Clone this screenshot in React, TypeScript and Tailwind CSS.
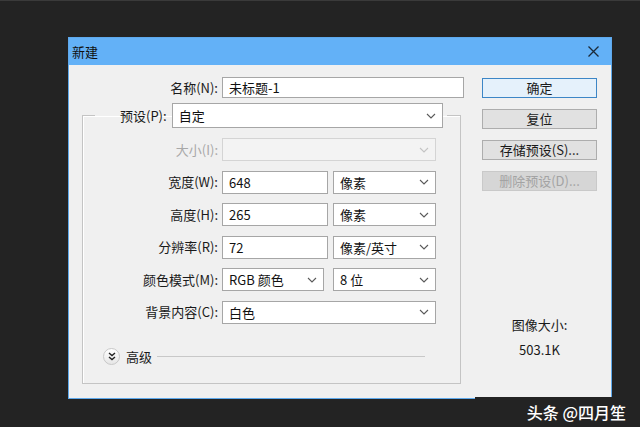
import type { ReactNode } from "react";

const font = { fontFamily: '"Noto Sans CJK SC", "Noto Sans", sans-serif' };

function Chevron({ light = false }: { light?: boolean }) {
  return (
    <svg width="10" height="6" viewBox="0 0 10 6" className="shrink-0">
      <path d="M1 1 L5 5 L9 1" fill="none" stroke={light ? "#c4c4c4" : "#5a5a5a"} strokeWidth="1.1" />
    </svg>
  );
}

function Select({ value, w, h = "h-[23px]", disabled = false }: { value: string; w: string; h?: string; disabled?: boolean }) {
  return (
    <div
      className={`${w} ${h} flex items-center justify-between pl-[6px] pr-[6px] border ${
        disabled ? "border-[#d4d4d4] bg-[#f3f3f3]" : "border-[#a6a6a6] bg-white"
      }`}
    >
      <span className="text-[13px] text-[#111] leading-none">{value}</span>
      <Chevron light={disabled} />
    </div>
  );
}

function Input({ value, w }: { value: string; w: string }) {
  return (
    <div className={`${w} h-[23px] flex items-center pl-[6px] border border-[#a6a6a6] bg-white`}>
      <span className="text-[13px] text-[#111] leading-none">{value}</span>
    </div>
  );
}

function Row({ label, disabled = false, children }: { label: string; disabled?: boolean; children: ReactNode }) {
  return (
    <div className="flex items-center h-[23px]">
      <span className={`w-[135px] text-right text-[13px] ${disabled ? "text-[#a8a8a8]" : "text-[#1a1a1a]"}`}>{label}</span>
      <div className="ml-[4px] flex items-center gap-[5px]">{children}</div>
    </div>
  );
}

function Button({ label, primary = false, disabled = false }: { label: string; primary?: boolean; disabled?: boolean }) {
  let cls = "border-[#adadad] bg-[#e1e1e1] text-[#1a1a1a]";
  if (primary) cls = "border-[#3d86c6] bg-[#e5f1fb] text-[#1a1a1a]";
  if (disabled) cls = "border-[#c9c9c9] bg-[#d6d6d6] text-[#a3a3a3]";
  return (
    <div className={`h-[20px] w-[115px] flex items-center justify-center border text-[13px] ${cls}`}>{label}</div>
  );
}

export default function App() {
  return (
    <div className="relative w-[640px] h-[427px] overflow-hidden bg-[#232323] pt-[37px] pl-[68px]" style={font}>
      <div className="absolute left-0 top-0 w-full h-px bg-[#3a3a3a]" />
      <div className="w-[544px] h-[362px] border border-[#5ea9ec] bg-[#f0f0f0] flex flex-col">
        <div className="h-[27px] bg-[#63b1f7] flex items-center justify-between pl-[3px] pr-[12px]">
          <span className="text-[13px] text-[#111]">新建</span>
          <svg width="11" height="11" viewBox="0 0 11 11">
            <path d="M0.5 0.5 L10.5 10.5 M10.5 0.5 L0.5 10.5" stroke="#1c2a38" strokeWidth="1.3" />
          </svg>
        </div>
        <div className="flex flex-1">
          <div className="w-[400px] pl-[13px] pt-[12px] flex flex-col">
            <div className="flex items-center h-[21px]">
              <span className="w-[136px] text-right text-[13px] text-[#1a1a1a]">名称(N):</span>
              <div className="ml-[4px] w-[242px] h-[21px] flex items-center pl-[6px] border border-[#a6a6a6] bg-white">
                <span className="text-[13px] text-[#111] leading-none">未标题-1</span>
              </div>
            </div>
            <fieldset className="mt-[5px] w-[379px] h-[281px] border border-[#c4c4c4] shadow-[inset_1px_1px_0_#ffffff]">
              <legend className="ml-[12px] pl-[25px] pr-[4px]">
                <div className="flex items-center h-[25px]">
                  <span className="text-[13px] text-[#1a1a1a]">预设(P):</span>
                  <div className="ml-[5px]">
                    <Select value="自定" w="w-[271px]" h="h-[25px]" />
                  </div>
                </div>
              </legend>
              <div className="mt-[10px] flex flex-col gap-[9.5px]">
                <Row label="大小(I):" disabled>
                  <Select value="" w="w-[214px]" disabled />
                </Row>
                <Row label="宽度(W):">
                  <Input value="648" w="w-[106px]" />
                  <Select value="像素" w="w-[103px]" />
                </Row>
                <Row label="高度(H):">
                  <Input value="265" w="w-[106px]" />
                  <Select value="像素" w="w-[103px]" />
                </Row>
                <Row label="分辨率(R):">
                  <Input value="72" w="w-[106px]" />
                  <Select value="像素/英寸" w="w-[103px]" />
                </Row>
                <Row label="颜色模式(M):">
                  <Select value="RGB 颜色" w="w-[102px]" />
                  <div className="ml-[4px]">
                    <Select value="8 位" w="w-[103px]" />
                  </div>
                </Row>
                <Row label="背景内容(C):">
                  <Select value="白色" w="w-[214px]" />
                </Row>
              </div>
              <div className="mt-[23px] flex items-center pl-[20px] pr-[35px]">
                <div className="w-[17px] h-[17px] rounded-full border border-[#c8c8c8] bg-gradient-to-b from-white to-[#e6e6e6] flex items-center justify-center">
                  <svg width="8" height="9" viewBox="0 0 8 9">
                    <path d="M1 1 L4 3.5 L7 1 M1 5 L4 7.5 L7 5" fill="none" stroke="#222" strokeWidth="1.4" />
                  </svg>
                </div>
                <span className="ml-[6px] text-[13px] text-[#1a1a1a]">高级</span>
                <div className="ml-[5px] flex-1 h-px bg-[#c8c8c8]" />
              </div>
            </fieldset>
          </div>
          <div className="ml-[13px] w-[115px] pt-[13px] flex flex-col">
            <div className="flex flex-col gap-[11px]">
              <Button label="确定" primary />
              <Button label="复位" />
              <Button label="存储预设(S)..." />
              <Button label="删除预设(D)..." disabled />
            </div>
            <div className="mt-[124px] flex flex-col items-center text-[13px] text-[#1a1a1a]">
              <span>图像大小:</span>
              <span className="mt-[5px]">503.1K</span>
            </div>
          </div>
        </div>
      </div>
      <div className="absolute left-[475px] top-[397px] right-0 bottom-0 bg-[#232323] flex items-center justify-end pr-[14px]">
        <span className="text-[16px] font-medium text-white">头条 @四月笙</span>
      </div>
    </div>
  );
}
